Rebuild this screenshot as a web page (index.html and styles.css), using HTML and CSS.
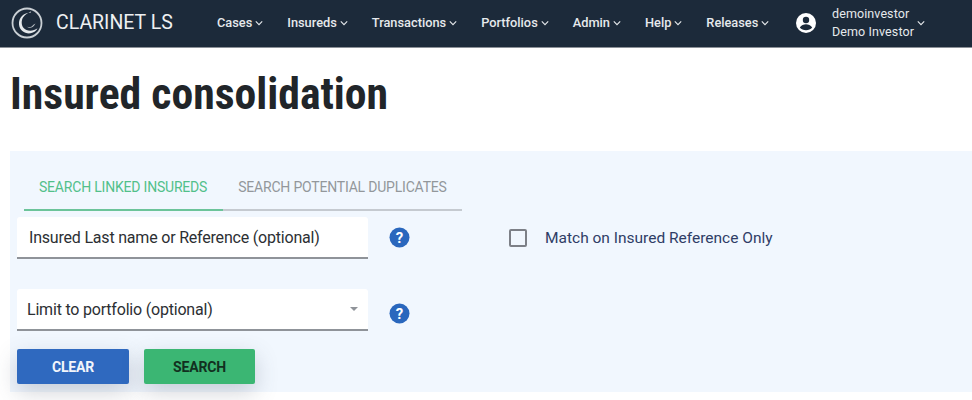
FILE: index.html
```html
<!DOCTYPE html>
<html lang="en">
<head>
<meta charset="utf-8">
<title>Insured consolidation</title>
<link rel="stylesheet" href="styles.css">
</head>
<body>
<header class="nav">
  <div class="brand">
    <svg class="logo" width="32" height="34" viewBox="0 0 32 34" fill="none">
      <circle cx="16" cy="17" r="14.500" stroke="#c9cfd4" stroke-width="1.800"/>
      <path d="M20 6.500C12.500 6.500 7.500 11.500 8 18.500c.5 6 6 9.500 11.500 8.800 3.500-.5 6-2.500 7-5-3 2.300-7.500 3.300-11 1.700-4-1.800-5.500-5.800-4.500-10 .8-3.300 4-6.500 9-8.500z" fill="#e4e8eb"/>
      <path d="M15.500 20.500c3 2.300 7 1.300 9-3-1 .6-1.500 1-2.500 1.500-.5 1.500-3.500 3-6.500 1.500z" fill="#b6bdc3"/>
    </svg>
    <span class="brand-name">CLARINET LS</span>
  </div>
  <nav class="menu">
    <a class="menu-item">Cases<svg class="chev" viewBox="0 0 10 6"><path d="M1 1l4 4 4-4"/></svg></a>
    <a class="menu-item">Insureds<svg class="chev" viewBox="0 0 10 6"><path d="M1 1l4 4 4-4"/></svg></a>
    <a class="menu-item">Transactions<svg class="chev" viewBox="0 0 10 6"><path d="M1 1l4 4 4-4"/></svg></a>
    <a class="menu-item">Portfolios<svg class="chev" viewBox="0 0 10 6"><path d="M1 1l4 4 4-4"/></svg></a>
    <a class="menu-item">Admin<svg class="chev" viewBox="0 0 10 6"><path d="M1 1l4 4 4-4"/></svg></a>
    <a class="menu-item">Help<svg class="chev" viewBox="0 0 10 6"><path d="M1 1l4 4 4-4"/></svg></a>
    <a class="menu-item">Releases<svg class="chev" viewBox="0 0 10 6"><path d="M1 1l4 4 4-4"/></svg></a>
  </nav>
  <div class="user">
    <svg class="avatar" width="22" height="22" viewBox="0 0 22 22">
      <circle cx="11" cy="11" r="10" fill="#fff"/>
      <circle cx="11" cy="8" r="3.200" fill="#1c2a3a"/>
      <path d="M4.800 15.500c1.500-2.300 4-3.200 6.200-3.200s4.700.9 6.200 3.200c-1.500 1.700-3.700 2.700-6.200 2.700s-4.700-1-6.200-2.700z" fill="#1c2a3a"/>
    </svg>
    <div class="user-names"><span>demoinvestor</span><span>Demo Investor</span></div>
    <svg class="chev chev-user" viewBox="0 0 10 6"><path d="M1 1l4 4 4-4"/></svg>
  </div>
</header>
<main>
  <h1 class="title">Insured consolidation</h1>
  <section class="panel">
    <div class="tabs">
      <div class="tab tab-active">SEARCH LINKED INSUREDS</div>
      <div class="tab">SEARCH POTENTIAL DUPLICATES</div>
    </div>
    <div class="row row-first">
      <div class="field field-text">Insured Last name or Reference (optional)</div>
      <svg class="help" width="21" height="21" viewBox="0 0 21 21"><circle cx="10.500" cy="10.500" r="10" fill="#2a67bd"/><text x="10.500" y="15.800" text-anchor="middle" class="help-mark">?</text></svg>
      <label class="check"><span class="box"></span><span>Match on Insured Reference Only</span></label>
    </div>
    <div class="row row-second">
      <div class="field field-select">Limit to portfolio (optional)<span class="caret"></span></div>
      <svg class="help help-low" width="21" height="21" viewBox="0 0 21 21"><circle cx="10.500" cy="10.500" r="10" fill="#2a67bd"/><text x="10.500" y="15.800" text-anchor="middle" class="help-mark">?</text></svg>
    </div>
    <div class="actions">
      <button class="btn btn-blue">CLEAR</button>
      <button class="btn btn-green">SEARCH</button>
    </div>
  </section>
</main>
</body>
</html>
```
FILE: styles.css
```css
* { box-sizing: border-box; }
html, body { margin: 0; padding: 0; }
body {
  width: 972px;
  height: 400px;
  overflow: hidden;
  background: #fff;
  font-family: Roboto, "Liberation Sans", sans-serif;
}
.nav {
  height: 48px;
  background: #1c2a3a;
  border-bottom: 1px solid #8b9097;
  display: flex;
  align-items: center;
  color: #e6e9ec;
  padding-bottom: 2px;
}
.brand {
  width: 217px;
  padding-left: 11px;
  display: flex;
  align-items: center;
  gap: 13px;
  flex: none;
}
.logo { flex: none; }
.brand-name { font-size: 19.500px; color: #eef0f2; }
.menu { display: flex; align-items: center; gap: 24px; flex: none; width: 578px; }
.menu-item {
  font-size: 12.800px;
  font-weight: 500;
  display: flex;
  align-items: center;
  gap: 3px;
  white-space: nowrap;
}
.chev { width: 8px; height: 6px; fill: none; stroke: #e6e9ec; stroke-width: 1.400; flex: none; }
.user { display: flex; align-items: center; }
.avatar { flex: none; }
.user-names {
  display: flex;
  flex-direction: column;
  gap: 3px;
  margin-left: 15px;
  font-size: 12.500px;
  line-height: 15px;
  white-space: nowrap;
  letter-spacing: .1px;
}
.chev-user { margin-left: 3px; margin-top: 1px; }
.title {
  margin: 0;
  height: 103px;
  padding: 21px 0 0 10px;
  font-size: 43.700px;
  line-height: 50px;
  font-weight: 700;
  color: #212529;
  font-stretch: condensed;
  white-space: nowrap;
}
.panel {
  margin-left: 10px;
  height: 241px;
  background: #f1f7fe;
  padding: 19px 0 0 7px;
  position: relative;
}
.tabs {
  display: flex;
  margin-left: 7px;
  width: 438px;
  height: 41px;
  border-bottom: 2px solid #c5cad0;
}
.tab {
  height: 41px;
  padding: 9px 16px 0 15px;
  font-size: 14px;
  line-height: 16px;
  letter-spacing: -.2px;
  color: #93979b;
  white-space: nowrap;
}
.tab-active { color: #52c08a; border-bottom: 2px solid #6cc49a; }
.row { display: flex; align-items: center; }
.row-first { margin-top: 6px; }
.row-second { margin-top: 30px; }
.field {
  width: 351px;
  height: 42px;
  background: #fff;
  border-bottom: 2px solid #8f9399;
  border-radius: 3px 3px 0 0;
  font-size: 16px;
  line-height: 42px;
  letter-spacing: -.2px;
  color: #2c2f33;
  white-space: nowrap;
}
.field-text { padding-left: 12px; }
.field-select { padding-left: 10px; position: relative; }
.caret {
  position: absolute;
  right: 10px;
  top: 18px;
  border-left: 4px solid transparent;
  border-right: 4px solid transparent;
  border-top: 4px solid #8f9399;
}
.help { margin-left: 21px; flex: none; margin-top: -2px; }
.help-low { margin-top: 6px; }
.help-mark { font: 700 15px Roboto, sans-serif; fill: #fff; }
.check {
  display: flex;
  align-items: center;
  gap: 18px;
  margin-left: 99px;
  font-size: 15.500px;
  color: #2f3d66;
  margin-top: -1px;
}
.box {
  width: 18px;
  height: 18px;
  border: 2px solid #7d8087;
  border-radius: 2px;
  flex: none;
}
.actions { display: flex; gap: 15px; margin-top: 18px; }
.btn {
  height: 35px;
  border: 0;
  border-radius: 2px;
  font: 700 14px Roboto, sans-serif;
  letter-spacing: -.15px;
  box-shadow: 0 8px 22px rgba(70, 80, 100, .25);
  padding: 0;
}
.btn-blue { width: 112px; background: #2f69bf; color: #f2f5fb; }
.btn-green { width: 111px; background: #3bb673; color: #12301f; }
```
